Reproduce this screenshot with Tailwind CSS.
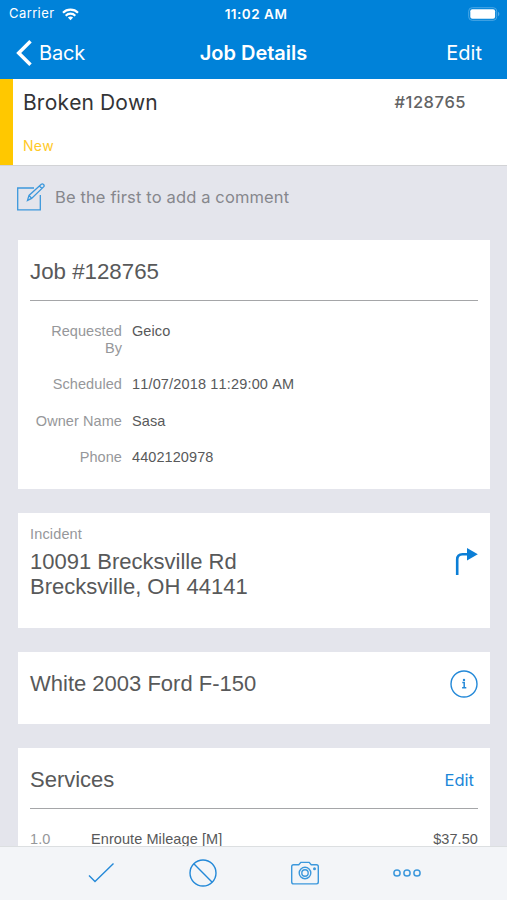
<!DOCTYPE html>
<html lang="en">
<head>
<meta charset="utf-8">
<title>Job Details</title>
<script src="https://cdn.jsdelivr.net/npm/@tailwindcss/browser@4"></script>
</head>
<body class="w-[507px] h-[900px] overflow-hidden bg-[#e4e5ec] font-['Liberation_Sans',sans-serif] [font-kerning:none] text-[#58595a]">
<div class="flex flex-col h-[900px]">
  <header class="h-[79px] shrink-0 bg-[#0082d9] text-white font-['Inter',sans-serif]">
    <div class="grid grid-cols-3 items-center h-[28px] pl-[9px] pr-[7px] text-[13px]">
      <div class="flex items-center gap-[7px]">
        <span class="tracking-[0.5px]">Carrier</span>
        <svg width="17" height="13" viewBox="0 0 17 13" fill="none" stroke="white" stroke-width="2.1"><path d="M1 4.800C5 .6 12 .6 16 4.800M3.700 7.700c2.700-2.800 6.900-2.800 9.600 0"/><path d="M8.500 12.200 5.900 9.600c1.500-1.400 3.700-1.400 5.200 0z" fill="white" stroke="none"/></svg>
      </div>
      <div class="text-center font-semibold whitespace-nowrap text-[13.5px] tracking-[0.5px] pl-[3px]">11:02 AM</div>
      <div class="flex justify-end">
        <svg width="32" height="14" viewBox="0 0 32 14"><rect x=".7" y=".7" width="28" height="12.600" rx="3.500" fill="none" stroke="#4ba8e5"/><rect x="2.300" y="2.300" width="24.800" height="9.400" rx="2" fill="white"/><path d="M30.200 4.800c1.500.7 1.500 3.700 0 4.400z" fill="#67b4e9"/></svg>
      </div>
    </div>
    <div class="grid grid-cols-3 items-center h-[49px] pl-[16px] pr-[25px] text-[20px]">
      <div class="flex items-center gap-[7px]">
        <svg width="16" height="26" viewBox="0 0 16 26" fill="none" stroke="white" stroke-width="3.500"><path d="M14.500 1.300 2.700 13l11.800 11.700"/></svg>
        <span class="tracking-[-0.2px]">Back</span>
      </div>
      <div class="text-center font-semibold whitespace-nowrap pl-[9px]">Job Details</div>
      <div class="text-right">Edit</div>
    </div>
  </header>

  <section class="flex h-[87px] shrink-0 border-b border-[#d2d3d6] bg-white font-['Inter',sans-serif]">
    <div class="w-[13px] bg-[#ffc800]"></div>
    <div class="flex-1 pl-[10px] pr-[41px]">
      <div class="flex justify-between items-center h-[46px]">
        <span class="text-[21px] tracking-[0.1px] text-[#333436] pt-px">Broken Down</span>
        <span class="text-[16.5px] tracking-[0.5px] font-medium text-[#626364]">#128765</span>
      </div>
      <div class="text-[14px] tracking-[0.3px] leading-[20px] mt-[11px] text-[#ffc928]">New</div>
    </div>
  </section>

  <main class="flex-1 min-h-0 overflow-hidden px-[18px]">
    <div class="flex items-center h-[74px] pb-[12px] font-['Inter',sans-serif] text-[16.5px] tracking-[0.13px] text-[#86878c]">
      <svg class="shrink-0 -ml-px mr-[10px]" width="28" height="28" viewBox="0 0 28 28" fill="none" stroke="#3c98dc" stroke-width="1.300"><path d="M17 5H.7v21.800h22.600V12"/><path d="m10.500 17.400 1.500-5L24.300 1.300c1.500-1.100 3.600.8 2.500 2.400L14.600 15.400l-4.100 2zM12 12.400l2.600 3M22.400 3l2.800 2.700"/></svg>
      <span>Be the first to add a comment</span>
    </div>

    <section class="h-[249px] w-[472px] bg-white px-[12px]">
      <h2 class="h-[61px] border-b-[1.500px] border-[#a5a6a8] text-[22.3px] leading-[64px]">Job #128765</h2>
      <dl class="grid grid-cols-[92px_1fr] gap-x-[10px] text-[14.5px] tracking-[0.08px] leading-[17px] pt-[22px]">
        <dt class="text-right h-[53px] text-[#96979a]">Requested<br>By</dt><dd>Geico</dd>
        <dt class="text-right h-[36.500px] text-[#96979a]">Scheduled</dt><dd class="tracking-[0.16px]">11/07/2018 11:29:00 AM</dd>
        <dt class="text-right h-[36.500px] text-[#96979a]">Owner Name</dt><dd>Sasa</dd>
        <dt class="text-right text-[#96979a]">Phone</dt><dd>4402120978</dd>
      </dl>
    </section>

    <section class="flex justify-between h-[115px] w-[472px] mt-[24px] bg-white px-[12px]">
      <div class="pt-[13px]">
        <div class="text-[14.5px] tracking-[0.15px] leading-[17px] text-[#96979a]">Incident</div>
        <div class="text-[22px] leading-[25px] mt-[6px]">10091 Brecksville Rd<br>Brecksville, OH 44141</div>
      </div>
      <svg class="mt-[35px]" width="23" height="28" viewBox="0 0 23 28"><path d="M2.200 27V11.500c0-3.300 2-5.300 5.300-5.300H13" fill="none" stroke="#0b7ed6" stroke-width="2.600"/><path d="M12 0v12.400l10.800-6.200z" fill="#0b7ed6"/></svg>
    </section>

    <section class="flex items-center justify-between h-[72px] w-[472px] mt-[24px] bg-white px-[12px] pb-[8px]">
      <span class="text-[22px] pb-[2px]">White 2003 Ford F-150</span>
      <svg width="28" height="28" viewBox="0 0 28 28" fill="none" stroke="#2489d8"><circle cx="14" cy="14" r="13" stroke-width="1.400"/><path d="M12.300 12.500h1.900v5.200m-2.100 0h4.200" stroke-width="1.500"/><circle cx="14" cy="9.900" r="1.200" fill="#2489d8" stroke="none"/></svg>
    </section>

    <section class="h-[120px] w-[472px] mt-[24px] bg-white px-[12px]">
      <div class="flex items-center justify-between h-[61px] border-b-[1.500px] border-[#a5a6a8] pr-[4px]">
        <h2 class="text-[22px] pt-[3px]">Services</h2>
        <span class="font-['Inter',sans-serif] text-[16.5px] text-[#1c87d8] pt-[4px]">Edit</span>
      </div>
      <div class="grid grid-cols-[61px_1fr_auto] text-[14.5px] tracking-[0.08px] leading-[17px] pt-[22px]">
        <span class="text-[#96979a]">1.0</span><span>Enroute Mileage [M]</span><span>$37.50</span>
      </div>
    </section>
  </main>

  <footer class="h-[54px] shrink-0 border-t border-[#dcdfe1] bg-[#f3f5f8] flex items-center justify-center gap-[74px] pb-[2px]">
    <svg width="28" height="28" viewBox="0 0 28 28" fill="none" stroke="#2489d8" stroke-width="1.400"><path d="m2 16.500 6 6L26.500 4.500"/></svg>
    <svg width="28" height="28" viewBox="0 0 28 28" fill="none" stroke="#2489d8" stroke-width="1.400"><circle cx="14" cy="14" r="13"/><path d="m4.800 4.800 18.400 18.400"/></svg>
    <svg width="28" height="28" viewBox="0 0 28 28" fill="none" stroke="#3c98dc" stroke-width="1.400"><path d="M2.500 5.700h5.300l2-2.300h8.400l2 2.300h5.300c1.200 0 1.800.6 1.800 1.800v15.600c0 1.200-.6 1.800-1.800 1.800h-23c-1.200 0-1.800-.6-1.800-1.800V7.500c0-1.200.6-1.800 1.800-1.800z"/><circle cx="14" cy="14" r="5.800"/><circle cx="14" cy="14" r="3.200"/><circle cx="23.500" cy="9.700" r="1.500" fill="#3c98dc" stroke="none"/></svg>
    <svg width="28" height="28" viewBox="0 0 28 28" fill="none" stroke="#3c98dc" stroke-width="1.500"><circle cx="4" cy="14" r="3.100"/><circle cx="14" cy="14" r="3.100"/><circle cx="24" cy="14" r="3.100"/></svg>
  </footer>
</div>
</body>
</html>
